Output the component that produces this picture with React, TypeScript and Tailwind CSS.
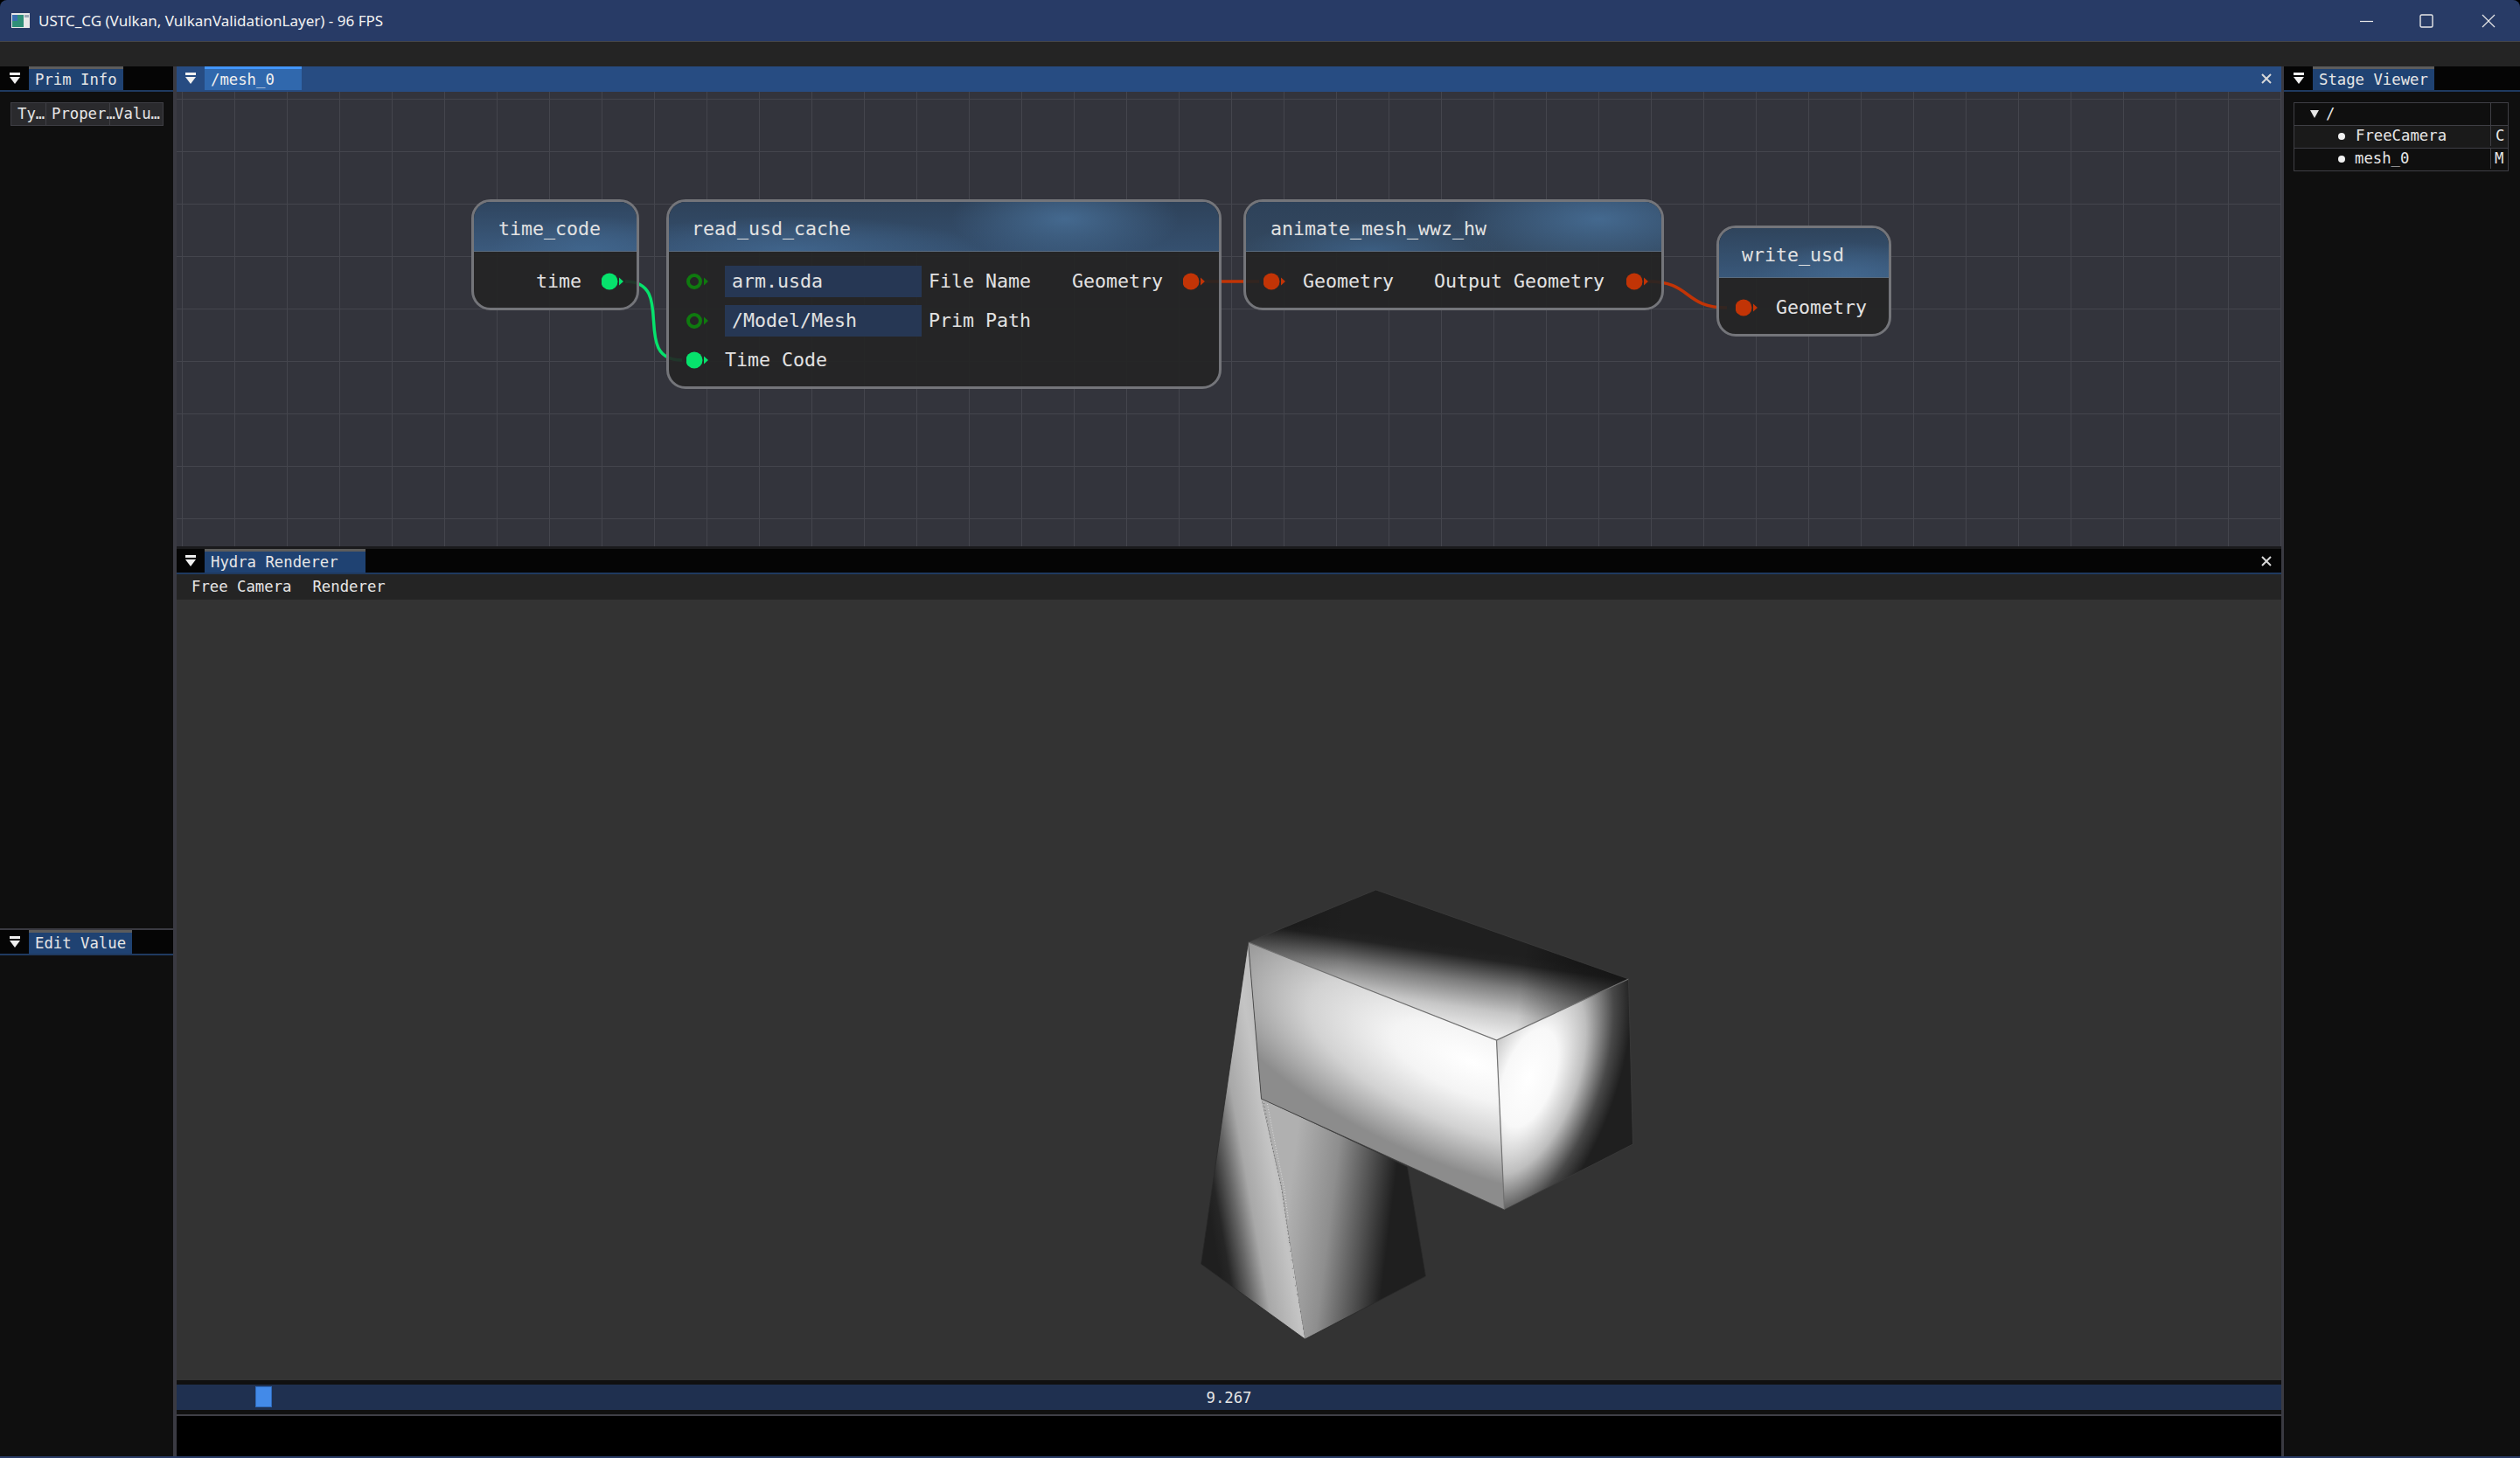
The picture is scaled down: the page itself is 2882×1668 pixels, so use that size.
const mono = "font-['DejaVu_Sans_Mono',monospace]";

const CollapseArrow = () => (
  <svg width="14" height="15" viewBox="0 0 14 15" className="block">
    <rect x="1" y="1" width="12" height="3" fill="#f0f0f0" />
    <path d="M1 6h12l-6 8z" fill="#f0f0f0" />
  </svg>
);

const CloseX = () => (
  <svg width="14" height="14" viewBox="0 0 14 14">
    <path d="M2 2l10 10M12 2L2 12" stroke="#d8d8d8" strokeWidth="2" fill="none" />
  </svg>
);

// imgui style dock tab
const DockTab = ({ label, width, focused }: { label: string; width: string; focused?: boolean }) => (
  <div
    className={`${width} h-full pl-[7px] flex items-center text-[17.3px] leading-none pt-[1px] border-t-[3px] ${
      focused ? "bg-[#3068ad] border-[#4296fa] text-[#f0f0f0]" : "bg-[#1f4272] border-[#5c5c5c] text-[#e6e6e6]"
    }`}
  >
    {label}
  </div>
);

const TabBar = ({
  label,
  tabWidth,
  focused,
  close,
  collapseWidth = "w-[33px]",
}: {
  label: string;
  tabWidth: string;
  focused?: boolean;
  close?: boolean;
  collapseWidth?: string;
}) => (
  <div className={`h-[29px] shrink-0 flex border-b-2 ${focused ? "bg-[#274c82] border-[#274c82]" : "bg-[#050505] border-[#1f3a60]"}`}>
    <div className={`${collapseWidth} flex items-center justify-center`}>
      <CollapseArrow />
    </div>
    <DockTab label={label} width={tabWidth} focused={focused} />
    {close && (
      <div className="ml-auto mr-[10px] flex items-center">
        <CloseX />
      </div>
    )}
  </div>
);

const Pin = ({ color, open }: { color: string; open?: boolean }) => (
  <svg width="26" height="20" viewBox="0 0 26 20" className="shrink-0">
    {open ? (
      <circle cx="9" cy="10" r="7" fill="none" stroke={color} strokeWidth="4" />
    ) : (
      <circle cx="9" cy="10" r="9.5" fill={color} />
    )}
    <path d="M20 5.5l5 4.5-5 4.5z" fill={color} />
  </svg>
);

const GREEN = "#06e26c";
const DARK_GREEN = "#0f7a0f";
const RED = "#c23406";

const Row = ({ className = "", children }: { className?: string; children: React.ReactNode }) => (
  <div className={`h-[44px] flex items-center ${className}`}>{children}</div>
);

const Node = ({
  title,
  pos,
  titlePad,
  header,
  children,
}: {
  title: string;
  pos: string;
  titlePad: string;
  header: string;
  children: React.ReactNode;
}) => (
  <div className={`absolute ${pos} rounded-[22px] border-[3px] border-[#74757a] bg-[#232324]/90 overflow-hidden text-[21.6px] leading-none text-[#e2e2e2]`}>
    <div className={`h-[57px] flex items-center pt-[5px] border-b border-[#5a6c80] ${titlePad} ${header}`}>{title}</div>
    <div className="pt-[12px] flex flex-col gap-[1px]">{children}</div>
  </div>
);

const InputBox = ({ text }: { text: string }) => (
  <div className="ml-[18px] w-[225px] h-[36px] bg-[#263754] flex items-center pl-[8px]">{text}</div>
);

const MeshView = () => (
  <svg viewBox="202 685 2406 893" className="w-full h-full block">
    <defs>
      <linearGradient id="top" gradientUnits="userSpaceOnUse" x1="1600" y1="1072" x2="1586" y2="1165">
        <stop offset="0" stopColor="#1f1f1f" />
        <stop offset="0.1" stopColor="#232323" />
        <stop offset="0.4" stopColor="#7c7c7c" />
        <stop offset="0.72" stopColor="#c6c6c6" />
        <stop offset="1" stopColor="#ececec" />
      </linearGradient>
      <linearGradient id="topShade" gradientUnits="userSpaceOnUse" x1="1427" y1="1077" x2="1862" y2="1119">
        <stop offset="0" stopColor="#000" stopOpacity="0.28" />
        <stop offset="0.25" stopColor="#000" stopOpacity="0" />
        <stop offset="0.72" stopColor="#000" stopOpacity="0" />
        <stop offset="1" stopColor="#111" stopOpacity="0.65" />
      </linearGradient>
      <radialGradient id="front" gradientUnits="userSpaceOnUse" cx="0" cy="0" r="1" gradientTransform="translate(1683 1214) rotate(21.5) scale(320 122)">
        <stop offset="0" stopColor="#ffffff" />
        <stop offset="0.3" stopColor="#f4f4f4" />
        <stop offset="0.62" stopColor="#d2d2d2" />
        <stop offset="1" stopColor="#8c8c8c" />
      </radialGradient>
      <radialGradient id="side" gradientUnits="userSpaceOnUse" cx="0" cy="0" r="1" gradientTransform="translate(1748 1232) rotate(20) scale(100 210)">
        <stop offset="0" stopColor="#ffffff" />
        <stop offset="0.28" stopColor="#f8f8f8" />
        <stop offset="0.55" stopColor="#bebebe" />
        <stop offset="0.82" stopColor="#484848" />
        <stop offset="1" stopColor="#1f1f1f" />
      </radialGradient>
      <linearGradient id="stemL" gradientUnits="userSpaceOnUse" x1="1385" y1="1402" x2="1482" y2="1385">
        <stop offset="0" stopColor="#1f1f1f" />
        <stop offset="0.11" stopColor="#262626" />
        <stop offset="0.31" stopColor="#666666" />
        <stop offset="0.5" stopColor="#a8a8a8" />
        <stop offset="0.82" stopColor="#c4c4c4" />
        <stop offset="1" stopColor="#bcbcbc" />
      </linearGradient>
      <linearGradient id="stemR" gradientUnits="userSpaceOnUse" x1="1470" y1="1400" x2="1592" y2="1415">
        <stop offset="0" stopColor="#b0b0b0" />
        <stop offset="0.4" stopColor="#8e8e8e" />
        <stop offset="0.72" stopColor="#505050" />
        <stop offset="0.96" stopColor="#1f1f1f" />
      </linearGradient>
    </defs>

    {/* stem */}
    <polygon points="1427,1077 1442,1256 1453,1304 1465,1357 1476,1429 1487,1500 1492,1531 1373,1445" fill="url(#stemL)" />
    <polygon points="1442,1256 1609,1334 1630,1459 1492,1531 1487,1500 1476,1429 1465,1357 1453,1304" fill="url(#stemR)" />
    <path d="M1427 1077L1373 1445L1492 1531L1630 1459L1609 1334" fill="none" stroke="#2a2a2a" strokeWidth="0.8" />
    {/* z-fighting dots along the seam */}
    <path d="M1445 1261L1453 1304L1465 1357L1474 1420" fill="none" stroke="#6a6a6a" strokeWidth="1" strokeDasharray="1 3" />
    <path d="M1449 1262L1457 1304L1468 1357L1473 1395" fill="none" stroke="#dedede" strokeWidth="1" strokeDasharray="1 2" />
    <path d="M1474 1420L1479 1460L1487 1500L1492 1531" fill="none" stroke="#5c5c5c" strokeWidth="0.8" strokeDasharray="1 9" />

    {/* box */}
    <polygon points="1573,1017 1862,1119 1711,1189 1427,1077" fill="url(#top)" />
    <polygon points="1573,1017 1862,1119 1711,1189 1427,1077" fill="url(#topShade)" />
    <polygon points="1427,1077 1711,1189 1720,1383 1442,1256" fill="url(#front)" />
    <polygon points="1711,1189 1862,1119 1867,1308 1720,1383" fill="url(#side)" />

    <path d="M1427 1077L1711 1189L1862 1119M1711 1189L1720 1383" fill="none" stroke="#727272" strokeWidth="1.2" />
    <path d="M1427 1077L1442 1256L1720 1383L1867 1308L1862 1119L1573 1017L1427 1077" fill="none" stroke="#3c3c3c" strokeWidth="0.8" />
  </svg>
);

export default function App() {
  return (
    <div className="w-[2882px] h-[1668px] bg-black overflow-hidden">
      <div className={`w-full h-full flex flex-col rounded-t-[8px] overflow-hidden border-b-2 border-[#283b66] ${mono}`}>
        {/* window title */}
        <div className="h-[47px] shrink-0 bg-[#283b66] flex items-center pl-[13px] text-[#f2f2f2] font-['Noto_Sans',sans-serif] text-[17.05px] leading-none">
          <svg width="21" height="17" viewBox="0 0 21 17" className="mr-[10px]">
            <rect width="21" height="17" fill="#e8e8e8" />
            <rect x="1" y="2" width="13" height="14" fill="#2f8f78" />
            <rect x="1" y="2" width="6" height="7" fill="#3a6fb0" />
            <rect x="15" y="2" width="5" height="3" fill="#9aa7b5" />
          </svg>
          <span>USTC_CG (Vulkan, VulkanValidationLayer) - 96 FPS</span>
          <div className="ml-auto flex items-center">
            <svg width="16" height="16" viewBox="0 0 16 16" className="mr-[53px]">
              <path d="M1 8.5h15" stroke="#e8e8e8" strokeWidth="1.2" />
            </svg>
            <svg width="16" height="16" viewBox="0 0 16 16" className="mr-[55px]">
              <rect x="1" y="1" width="14" height="14" rx="1.5" fill="none" stroke="#e8e8e8" strokeWidth="1.4" />
            </svg>
            <svg width="16" height="16" viewBox="0 0 16 16" className="mr-[28px]">
              <path d="M1 1l14 14M15 1L1 15" stroke="#e8e8e8" strokeWidth="1.2" />
            </svg>
          </div>
        </div>

        {/* empty main menu */}
        <div className="h-[29px] shrink-0 bg-[#242424] border-t border-[#454545]" />

        <div className="flex-1 min-h-0 flex bg-[#3a3a42]">
          {/* left dock */}
          <div className="w-[198px] shrink-0 flex flex-col gap-[2px] text-[#e6e6e6]">
            <div className="h-[986px] shrink-0 flex flex-col bg-[#0f0f0f]">
              <TabBar label="Prim Info" tabWidth="w-[108px]" />
              <div className="p-[12px]">
                <div className="w-[175px] h-[27px] flex bg-[#2a2a2d] border border-[#3f3f45] text-[17.3px] leading-none items-center">
                  <div className="w-[40px] h-full pl-[7px] flex items-center border-r border-[#3f3f45]">Ty…</div>
                  <div className="w-[73px] h-full pl-[6px] flex items-center border-r border-[#3f3f45] whitespace-nowrap">Proper…</div>
                  <div className="flex-1 h-full pl-[5px] flex items-center whitespace-nowrap">Valu…</div>
                </div>
              </div>
            </div>
            <div className="flex-1 flex flex-col bg-[#0f0f0f]">
              <TabBar label="Edit Value" tabWidth="w-[118px]" />
            </div>
          </div>

          {/* center dock */}
          <div className="w-[2407px] ml-[4px] shrink-0 flex flex-col text-[#e6e6e6]">
            <TabBar label="/mesh_0" tabWidth="w-[111px]" focused close collapseWidth="w-[32px]" />
            <div className="relative h-[520px] shrink-0 bg-[#33343c] bg-[linear-gradient(to_right,#44454d_1px,transparent_1px),linear-gradient(to_bottom,#44454d_1px,transparent_1px)] bg-[size:60px_60px] bg-[position:6px_8px] overflow-hidden">
              <svg viewBox="202 104 2407 520" className="absolute inset-0 w-full h-full">
                <path d="M715 321C775 321 720 411 780 411" fill="none" stroke={GREEN} strokeWidth="3.5" />
                <path d="M1378 321L1440 321" fill="none" stroke={RED} strokeWidth="3.5" />
                <path d="M1885 321C1935 321 1925 351 1975 351" fill="none" stroke={RED} strokeWidth="3.5" />
              </svg>

              <Node
                title="time_code"
                pos="left-[337px] top-[123px] w-[192px] h-[127px]"
                titlePad="pl-[28px]"
                header="bg-[radial-gradient(ellipse_110px_40px_at_70%_100%,#40658c,transparent),linear-gradient(to_bottom,#2f455f,#3b5a7d)]"
              >
                <Row className="justify-end pr-[14px] gap-[23px]">
                  time
                  <Pin color={GREEN} />
                </Row>
              </Node>

              <Node
                title="read_usd_cache"
                pos="left-[560px] top-[123px] w-[635px] h-[217px]"
                titlePad="pl-[26px]"
                header="bg-[radial-gradient(ellipse_130px_50px_at_72%_35%,#44698f,transparent),radial-gradient(ellipse_220px_40px_at_22%_100%,#40648b,transparent),linear-gradient(to_bottom,#2e425a,#35506f)]"
              >
                <Row className="pl-[20px] pr-[15px]">
                  <Pin color={DARK_GREEN} open />
                  <InputBox text="arm.usda" />
                  <span className="ml-[8px]">File Name</span>
                  <span className="ml-auto mr-[23px]">Geometry</span>
                  <Pin color={RED} />
                </Row>
                <Row className="pl-[20px]">
                  <Pin color={DARK_GREEN} open />
                  <InputBox text="/Model/Mesh" />
                  <span className="ml-[8px]">Prim Path</span>
                </Row>
                <Row className="pl-[20px]">
                  <Pin color={GREEN} />
                  <span className="ml-[18px]">Time Code</span>
                </Row>
              </Node>

              <Node
                title="animate_mesh_wwz_hw"
                pos="left-[1220px] top-[123px] w-[481px] h-[127px]"
                titlePad="pl-[28px]"
                header="bg-[radial-gradient(ellipse_170px_60px_at_85%_35%,#44698f,transparent),radial-gradient(ellipse_150px_35px_at_30%_100%,#3c5e82,transparent),linear-gradient(to_bottom,#2e425a,#33485f)]"
              >
                <Row className="pl-[20px] pr-[14px]">
                  <Pin color={RED} />
                  <span className="ml-[19px]">Geometry</span>
                  <span className="ml-auto mr-[25px]">Output Geometry</span>
                  <Pin color={RED} />
                </Row>
              </Node>

              <Node
                title="write_usd"
                pos="left-[1761px] top-[153px] w-[200px] h-[127px]"
                titlePad="pl-[26px]"
                header="bg-[radial-gradient(ellipse_110px_40px_at_75%_100%,#42678e,transparent),linear-gradient(to_bottom,#2f445c,#39587a)]"
              >
                <Row className="pl-[19px]">
                  <Pin color={RED} />
                  <span className="ml-[20px]">Geometry</span>
                </Row>
              </Node>
            </div>

            <div className="h-[3px] shrink-0 bg-[#1a1a1c]" />
            <TabBar label="Hydra Renderer" tabWidth="w-[184px]" close collapseWidth="w-[32px]" />
            <div className="h-[29px] shrink-0 bg-[#242424] flex items-center pl-[17px] pt-[1px] gap-[24px] text-[17.3px] leading-none">
              <span>Free Camera</span>
              <span>Renderer</span>
            </div>
            <div className="h-[893px] shrink-0 bg-[#333333]">
              <MeshView />
            </div>
            <div className="h-[39px] shrink-0 bg-[#101010] py-[5px]">
              <div className="relative h-[29px] bg-[#1f3050] flex items-center justify-center pt-[2px] text-[17.3px] leading-none text-[#e6e6e6]">
                <div className="absolute left-[90px] top-[2px] w-[19px] h-[24px] bg-[#438ae8] border border-[#2f69b8]" />
                9.267
              </div>
            </div>
            <div className="h-[2px] shrink-0 bg-[#3f3f46]" />
            <div className="flex-1 bg-black" />
          </div>

          {/* right dock */}
          <div className="flex-1 ml-[3px] flex flex-col bg-[#0f0f0f] text-[#e6e6e6]">
            <TabBar label="Stage Viewer" tabWidth="w-[139px]" />
            <div className="pt-[12px] pl-[11px]">
              <div className="w-[246px] border border-[#3f3f45] text-[17.3px] leading-none">
                <div className="h-[25px] flex">
                  <div className="w-[225px] flex items-center pl-[18px] border-r border-[#3f3f45]">
                    <svg width="10" height="9" viewBox="0 0 10 9" className="mr-[8px]">
                      <path d="M0 0h10L5 9z" fill="#e6e6e6" />
                    </svg>
                    /
                  </div>
                </div>
                <div className="h-[26px] flex bg-[#1a1a1a] border-t border-[#3f3f45] pb-[2px]">
                  <div className="w-[225px] flex items-center pl-[50px] border-r border-[#3f3f45]">
                    <span className="w-[8px] h-[8px] rounded-full bg-[#f0f0f0] mr-[12px]" />
                    FreeCamera
                  </div>
                  <div className="flex-1 pl-[5px] flex items-center overflow-hidden">C</div>
                </div>
                <div className="h-[26px] flex border-t border-[#3f3f45] pb-[2px]">
                  <div className="w-[225px] flex items-center pl-[50px] border-r border-[#3f3f45]">
                    <span className="w-[8px] h-[8px] rounded-full bg-[#f0f0f0] mr-[11px]" />
                    mesh_0
                  </div>
                  <div className="flex-1 pl-[4px] flex items-center overflow-hidden">M</div>
                </div>
              </div>
            </div>
          </div>
        </div>
      </div>
    </div>
  );
}
